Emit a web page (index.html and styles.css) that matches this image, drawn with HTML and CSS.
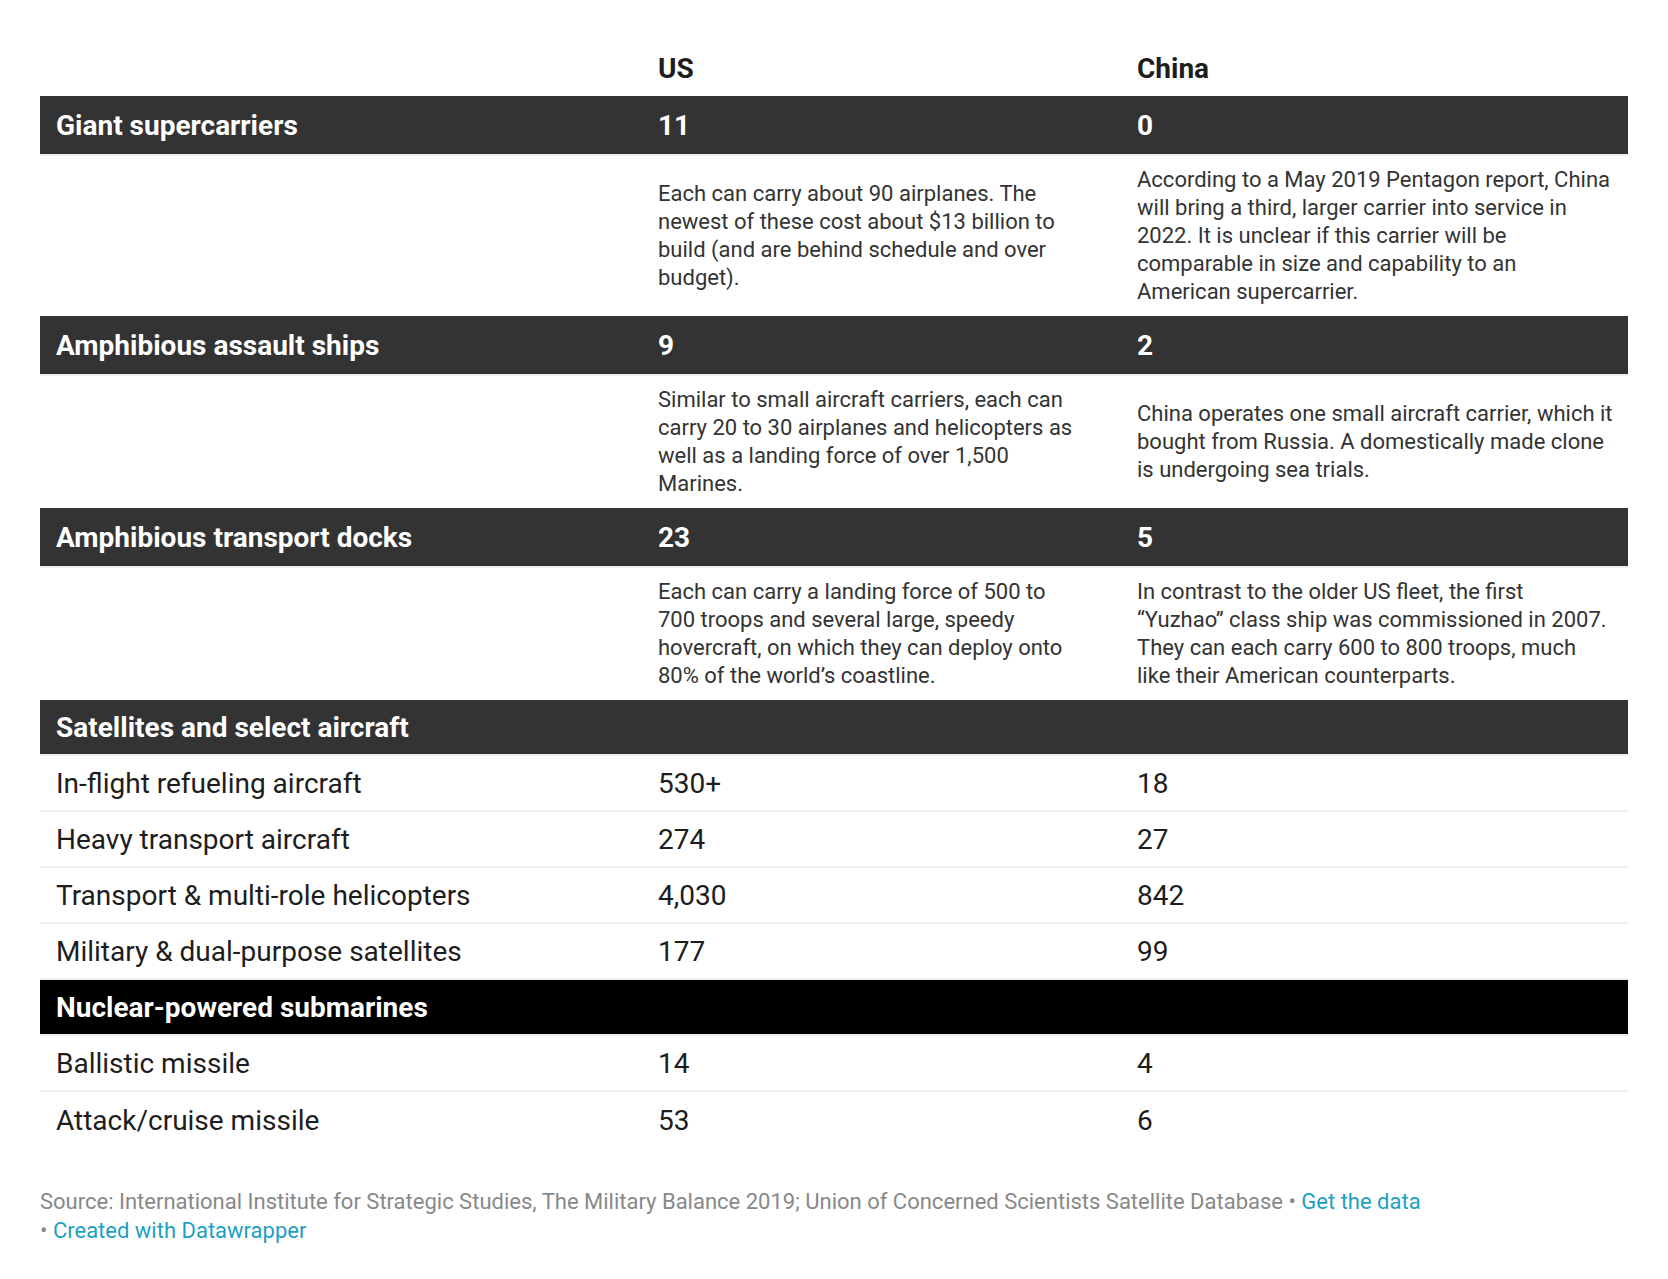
FILE: index.html
```html
<!DOCTYPE html>
<html lang="en">
<head>
<meta charset="utf-8">
<title>US vs China naval and air assets</title>
<link rel="stylesheet" href="styles.css">
</head>
<body>
<div class="chart">
  <div class="table">
    <div class="row head">
      <div class="cell"></div>
      <div class="cell">US</div>
      <div class="cell">China</div>
    </div>

    <div class="row band tall">
      <div class="cell">Giant supercarriers</div>
      <div class="cell">11</div>
      <div class="cell">0</div>
    </div>
    <div class="row desc">
      <div class="cell"></div>
      <div class="cell">Each can carry about 90 airplanes. The newest of these cost about $13 billion to build (and are behind schedule and over budget).</div>
      <div class="cell">According to a May 2019 Pentagon report, China will bring a third, larger carrier into service in 2022. It is unclear if this carrier will be comparable in size and capability to an American supercarrier.</div>
    </div>

    <div class="row band tall">
      <div class="cell">Amphibious assault ships</div>
      <div class="cell">9</div>
      <div class="cell">2</div>
    </div>
    <div class="row desc">
      <div class="cell"></div>
      <div class="cell">Similar to small aircraft carriers, each can carry 20 to 30 airplanes and helicopters as well as a landing force of over 1,500 Marines.</div>
      <div class="cell">China operates one small aircraft carrier, which it bought from Russia. A domestically made clone is undergoing sea trials.</div>
    </div>

    <div class="row band tall">
      <div class="cell">Amphibious transport docks</div>
      <div class="cell">23</div>
      <div class="cell">5</div>
    </div>
    <div class="row desc">
      <div class="cell"></div>
      <div class="cell">Each can carry a landing force of 500 to 700 troops and several large, speedy hovercraft, on which they can deploy onto 80% of the world’s coastline.</div>
      <div class="cell">In contrast to the older US fleet, the first “Yuzhao” class ship was commissioned in 2007. They can each carry 600 to 800 troops, much like their American counterparts.</div>
    </div>

    <div class="row band">
      <div class="cell">Satellites and select aircraft</div>
      <div class="cell"></div>
      <div class="cell"></div>
    </div>
    <div class="row data">
      <div class="cell">In-flight refueling aircraft</div>
      <div class="cell">530+</div>
      <div class="cell">18</div>
    </div>
    <div class="row data">
      <div class="cell">Heavy transport aircraft</div>
      <div class="cell">274</div>
      <div class="cell">27</div>
    </div>
    <div class="row data">
      <div class="cell">Transport &amp; multi-role helicopters</div>
      <div class="cell">4,030</div>
      <div class="cell">842</div>
    </div>
    <div class="row data">
      <div class="cell">Military &amp; dual-purpose satellites</div>
      <div class="cell">177</div>
      <div class="cell">99</div>
    </div>

    <div class="row band black">
      <div class="cell">Nuclear-powered submarines</div>
      <div class="cell"></div>
      <div class="cell"></div>
    </div>
    <div class="row data">
      <div class="cell">Ballistic missile</div>
      <div class="cell">14</div>
      <div class="cell">4</div>
    </div>
    <div class="row data last">
      <div class="cell">Attack/cruise missile</div>
      <div class="cell">53</div>
      <div class="cell">6</div>
    </div>
  </div>

  <div class="footer">
    <span class="source">Source: International Institute for Strategic Studies, The Military Balance 2019; Union of Concerned Scientists Satellite Database</span><span class="sep"> • </span><a class="link" href="#">Get the data</a><br><span class="sep">• </span><a class="link" href="#">Created with Datawrapper</a>
  </div>
</div>
</body>
</html>
```

FILE: styles.css
```css
* {
  box-sizing: border-box;
}

html, body {
  margin: 0;
  padding: 0;
  background: #ffffff;
}

body {
  font-family: Roboto, "Liberation Sans", Arial, sans-serif;
  color: #1d1d1d;
}

.chart {
  padding: 40px 40px 0 40px;
}

.table {
  width: 1588px;
  display: flex;
  flex-direction: column;
}

.row {
  display: grid;
  grid-template-columns: 602px 479px 507px;
}

.cell {
  padding: 0 16px;
}

.head {
  height: 56px;
  align-items: center;
  font-size: 28px;
  font-weight: 700;
  color: #1d1d1d;
}

.band {
  height: 56px;
  align-items: center;
  background: #333333;
  color: #ffffff;
  font-size: 28px;
  font-weight: 700;
  border-bottom: 2px solid #eeeeee;
}

.band.tall {
  height: 60px;
}

.band.black {
  background: #000000;
}

.desc {
  align-items: center;
  padding: 10px 0;
  font-size: 22px;
  line-height: 28px;
  color: #333333;
}

.desc .cell:nth-child(2) {
  padding-right: 40px;
}

.desc .cell:nth-child(3) {
  padding-right: 15px;
}

.data {
  height: 56px;
  align-items: center;
  font-size: 28px;
  color: #1d1d1d;
  border-bottom: 2px solid #eeeeee;
}

.data.last {
  border-bottom: none;
}

.footer {
  margin-top: 39px;
  font-size: 22px;
  line-height: 29px;
  color: #888888;
}

.footer .sep {
  color: #888888;
}

.footer .link {
  color: #1d9fc2;
  text-decoration: none;
}
```
